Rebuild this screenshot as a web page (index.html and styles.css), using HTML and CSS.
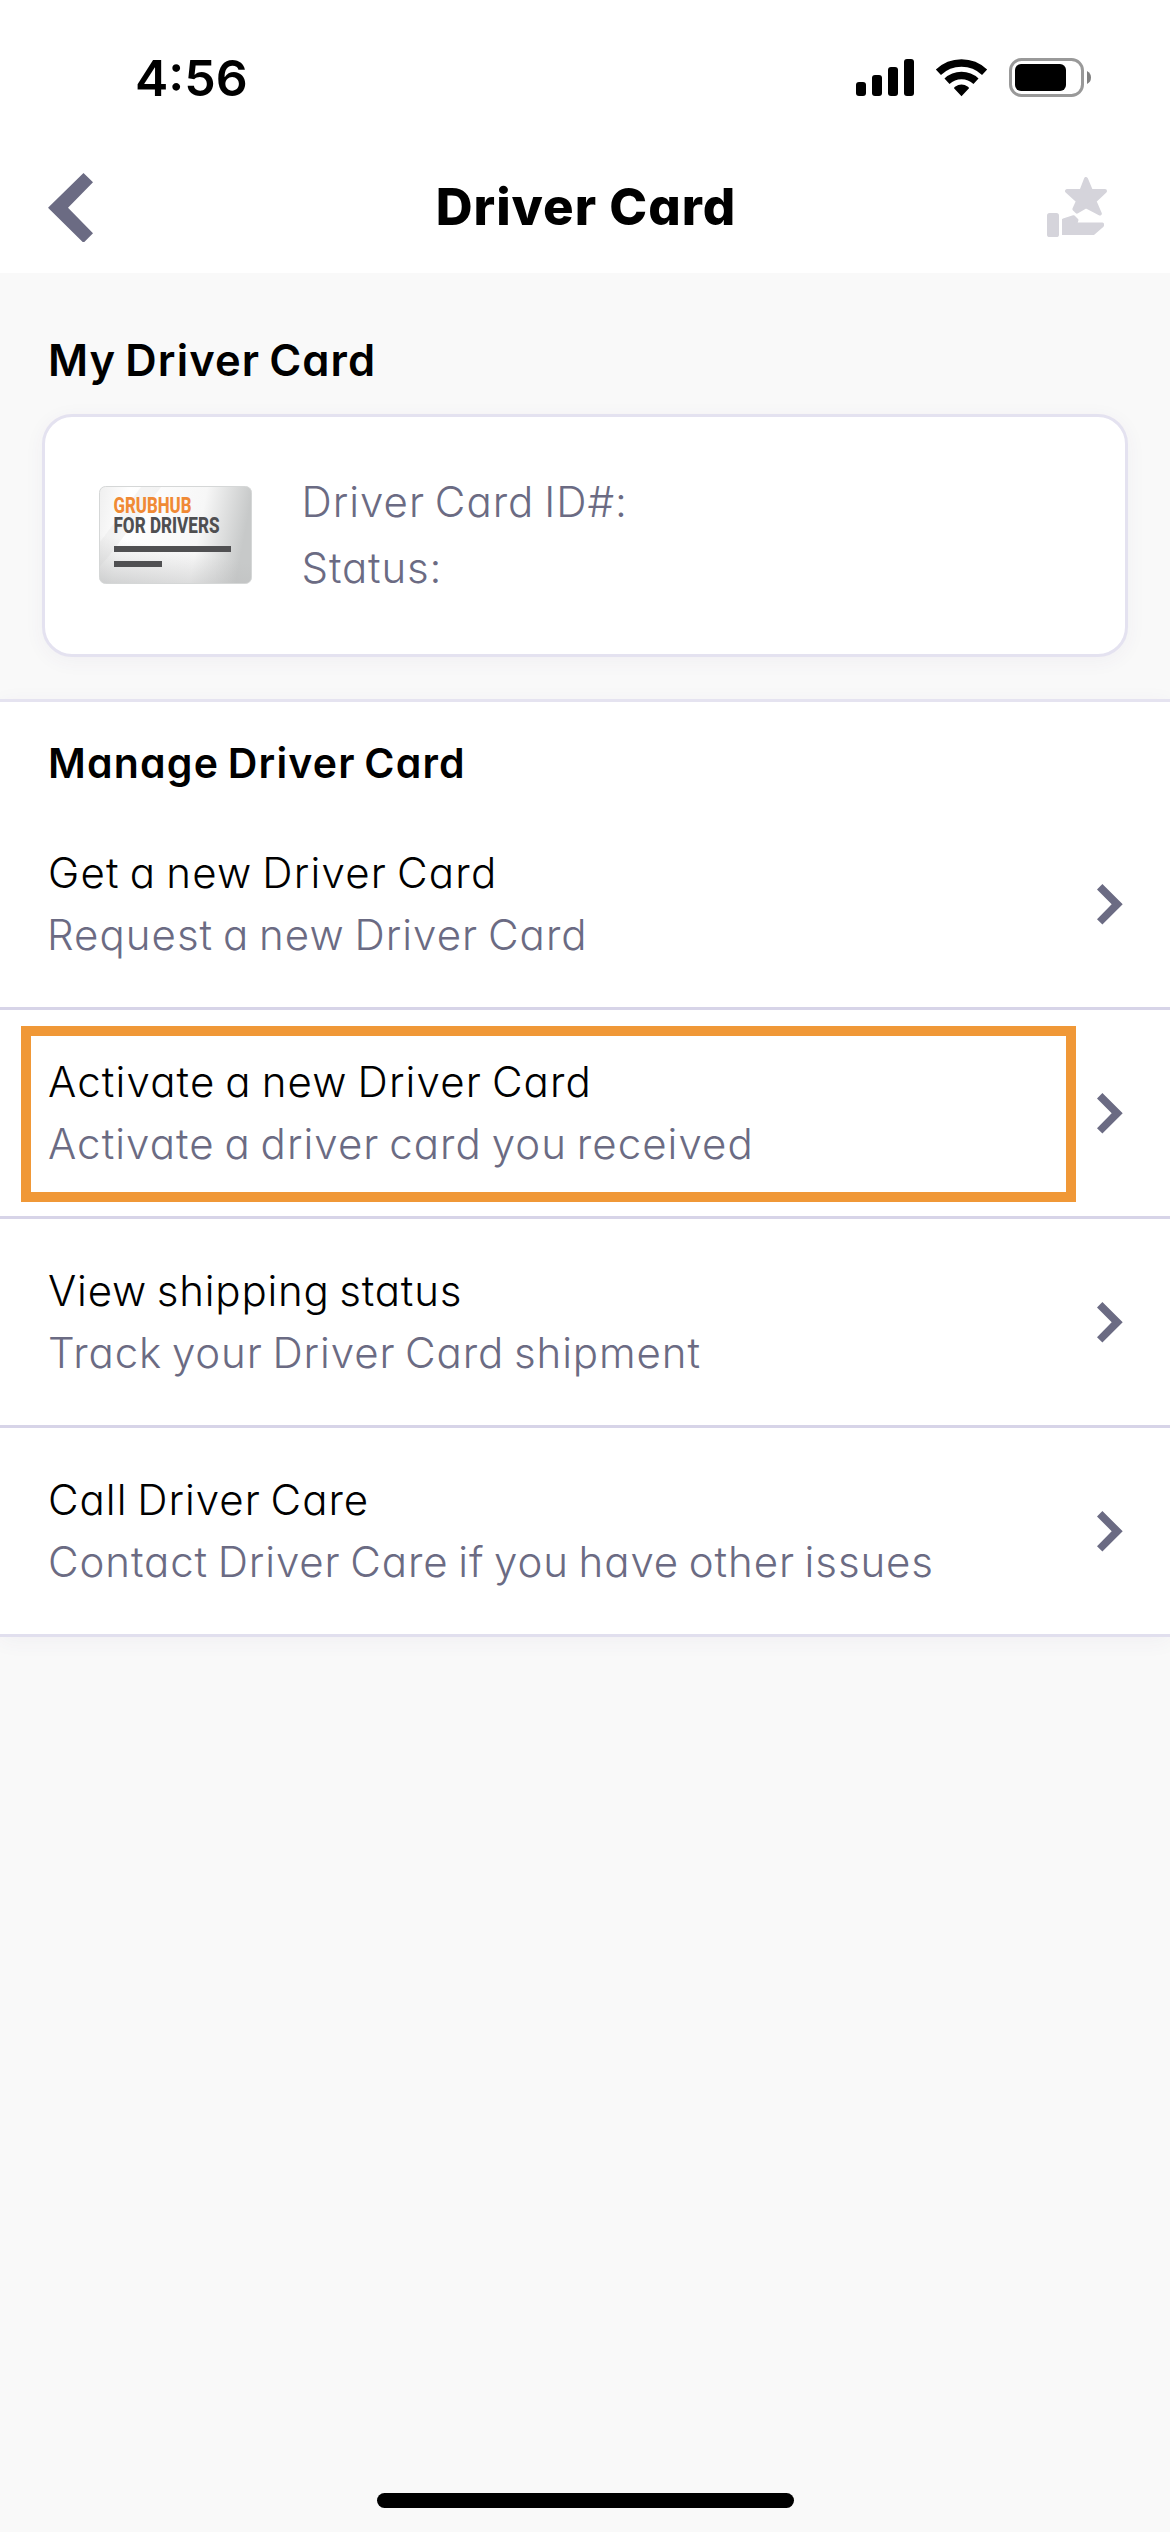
FILE: index.html
```
<!DOCTYPE html>
<html lang="en">
<head>
<meta charset="utf-8">
<title>Driver Card</title>
<link rel="stylesheet" href="styles.css">
</head>
<body>
<svg width="0" height="0" class="defs">
  <symbol id="chevron" viewBox="0 0 26 41"><path d="M5.4 0 25.7 20.3 5.4 40.6 0 35.2 14.7 20.3 0 5.4Z"/></symbol>
</svg>
<div class="screen">
  <div class="status-bar">
    <span class="time">4:56</span>
    <svg width="236" height="40" viewBox="0 0 236 40">
      <rect x="0" y="24" width="10" height="14" rx="3"/>
      <rect x="16" y="17" width="10" height="21" rx="3"/>
      <rect x="32" y="9" width="10" height="29" rx="3"/>
      <rect x="48" y="1" width="10" height="37" rx="3"/>
      <path d="M82.4 14.3A33.5 33.5 0 0 1 128.6 14.3M91 23.2A21.2 21.2 0 0 1 120 23.2" fill="none" stroke="#000" stroke-width="7.4"/>
      <path d="M105.5 38.3 98 30.3Q98 29.5 99 28.8 105.5 24.2 112 28.8 113 29.5 113 30.3Z"/>
      <rect x="154.5" y="1.5" width="72" height="36" rx="11" fill="none" stroke="#999" stroke-width="3"/>
      <rect x="159" y="6" width="51" height="27" rx="6"/>
      <path d="M231 13Q235 15 235 19.5 235 24 231 26Z" fill="#808080"/>
    </svg>
  </div>
  <header class="nav">
    <svg width="45" height="69" viewBox="0 0 45 69" class="muted"><path d="M35.5 0 45 9.3 20 34.7 45 60.3 36.3 69H34.7L0 34.7Z"/></svg>
    <h1>Driver Card</h1>
    <svg width="60" height="60" viewBox="0 0 60 60" class="reward">
      <rect y="36" width="12" height="24" rx="2.6"/>
      <path stroke-width="4" d="M39 2 44 14H58L47.4 24 52.8 36.6 39 29.2 30 34.6 27.4 32 31 24 20 14H34.4Z"/>
      <path stroke-width="3" d="M16.5 43 26.5 39.7 30 43 28.5 47H55.5V48.5L46.3 56.5H16.5Z"/>
      <path d="M15 42H18V58H15Z"/>
    </svg>
  </header>
  <section class="my-card">
    <h2 class="s-my">My Driver Card</h2>
    <div class="card">
      <svg width="153" height="98" viewBox="0 0 153 98">
        <defs>
          <linearGradient id="edge" x1="0" x2="1" y1="0" y2=".12"><stop offset="0" stop-color="#efefef"/><stop offset=".2" stop-color="#fff"/><stop offset=".7" stop-color="#f7f7f7"/><stop offset="1" stop-color="#c7c9c9"/></linearGradient>
          <linearGradient id="foot" x1=".35" x2=".2" y1=".6" y2="1.1"><stop offset="0" stop-color="#bbb" stop-opacity="0"/><stop offset="1" stop-color="#b4b6b7" stop-opacity=".7"/></linearGradient>
        </defs>
        <rect x=".5" y=".5" width="152" height="97" rx="6" fill="url(#edge)"/>
        <path d="M42 1H62L10 70 1 80V56Z" fill="#e5e5e5" opacity=".4"/>
        <rect x=".5" y=".5" width="152" height="97" rx="6" fill="url(#foot)" stroke="#d5d7d7"/>
        <g class="plate">
          <text x="14.5" y="27.3" textLength="78" lengthAdjust="spacingAndGlyphs" fill="#f08a35">GRUBHUB</text>
          <text x="14.5" y="47.3" textLength="106" lengthAdjust="spacingAndGlyphs" fill="#4f4f51">FOR DRIVERS</text>
        </g>
        <path d="M15 60H132V66H15ZM15 75H63V81H15Z" fill="#505052"/>
      </svg>
      <div class="info">
        <p class="s-id">Driver Card ID#:</p>
        <p class="s-status">Status:</p>
      </div>
    </div>
  </section>
  <section class="manage">
    <h2 class="s-manage">Manage Driver Card</h2>
    <div class="row">
      <div><p class="title s-get">Get a new Driver Card</p><p class="s-request">Request a new Driver Card</p></div>
      <svg class="muted" width="26" height="41"><use href="#chevron"/></svg>
    </div>
    <div class="row marked">
      <div><p class="title s-act">Activate a new Driver Card</p><p class="s-act-sub">Activate a driver card you received</p></div>
      <svg class="muted" width="26" height="41"><use href="#chevron"/></svg>
    </div>
    <div class="row">
      <div><p class="title s-view">View shipping status</p><p class="s-track">Track your Driver Card shipment</p></div>
      <svg class="muted" width="26" height="41"><use href="#chevron"/></svg>
    </div>
    <div class="row">
      <div><p class="title s-call">Call Driver Care</p><p class="s-contact">Contact Driver Care if you have other issues</p></div>
      <svg class="muted" width="26" height="41"><use href="#chevron"/></svg>
    </div>
  </section>
  <div class="home-indicator"></div>
</div>
</body>
</html>
```
FILE: styles.css
```
*, *::after { box-sizing: border-box; }
body, h1, h2, p { margin: 0; }
body {
  background: #f9f9f9;
  color: #000;
  font-family: Inter, sans-serif;
  font-feature-settings: "cv11";
  font-size: 42px;
  font-weight: 320;
}
svg { display: block; flex: none; }
.defs { position: absolute; }
.screen { width: 1170px; height: 2532px; display: flex; flex-direction: column; overflow: hidden; }
.muted { fill: #6b6b83; }

.status-bar {
  height: 141px;
  padding: 15px 78px 0 135px;
  background: #fff;
  display: flex;
  align-items: center;
  justify-content: space-between;
}
.time { font-size: 50px; font-weight: 600; line-height: 60px; }

.nav {
  height: 132px;
  padding: 0 63px 0 48px;
  background: #fff;
  display: grid;
  grid-template-columns: 60px 1fr 60px;
  align-items: center;
}
.nav h1 { padding-left: 17px; text-align: center; font-size: 51px; font-weight: 800; line-height: 62px; letter-spacing: 1px; }
.reward { fill: #d5d4db; stroke: #d5d4db; stroke-width: 0; stroke-linejoin: round; }

h2 { font-weight: 600; line-height: 62px; word-spacing: -3px; }
p { line-height: 62px; color: #6b6b83; white-space: nowrap; word-spacing: -3px; }

.my-card { padding: 56px 42px 42px; }
.my-card h2 { font-size: 43.5px; padding-left: 6px; margin-bottom: 23px; }
.card {
  height: 243px;
  padding-left: 54px;
  display: flex;
  align-items: center;
  gap: 49.5px;
  background: #fff;
  border: 3px solid #e4e2f0;
  border-radius: 30px;
  box-shadow: 0 4px 20px rgba(70, 60, 110, .05);
}
.card svg { margin-top: -1px; }
.card p { line-height: 66px; }
.info { margin-top: -1px; }

.manage {
  border-top: 3px solid #e5e3f0;
  background: #fff;
  box-shadow: 0 4px 20px rgba(70, 60, 110, .05);
}
.manage h2 { font-size: 41px; padding: 30px 48px 7px; }
.row {
  height: 209px;
  padding: 0 47px;
  display: flex;
  align-items: center;
  justify-content: space-between;
  border-bottom: 3px solid #d7d4e8;
  position: relative;
}
.row:last-child { border-bottom-color: #e1dfee; }
.title { color: #000; }
.marked::after {
  content: "";
  position: absolute;
  left: 21px;
  top: 16px;
  width: 1055px;
  height: 176px;
  border: 10px solid #f09837;
}

.home-indicator { width: 417px; height: 15px; margin: auto auto 24px; border-radius: 8px; background: #000; }
.plate { font: 800 22px Roboto, sans-serif; }

/* tracking tuned per label */
.s-my { letter-spacing: 1.1px; }
.s-manage { letter-spacing: 1.2px; }
.s-id { letter-spacing: 1px; }
.s-status { letter-spacing: .85px; }
.s-get { letter-spacing: 1.2px; padding-left: 1px; }
.s-request { letter-spacing: 1.02px; }
.s-act { letter-spacing: 1.14px; padding-left: 1px; }
.s-act-sub { letter-spacing: 1.04px; padding-left: 1px; }
.s-view { letter-spacing: .8px; padding-left: 1px; }
.s-track { letter-spacing: .9px; padding-left: 1px; }
.s-call { letter-spacing: 1px; padding-left: 1px; }
.s-contact { letter-spacing: .9px; padding-left: 1px; }
```
